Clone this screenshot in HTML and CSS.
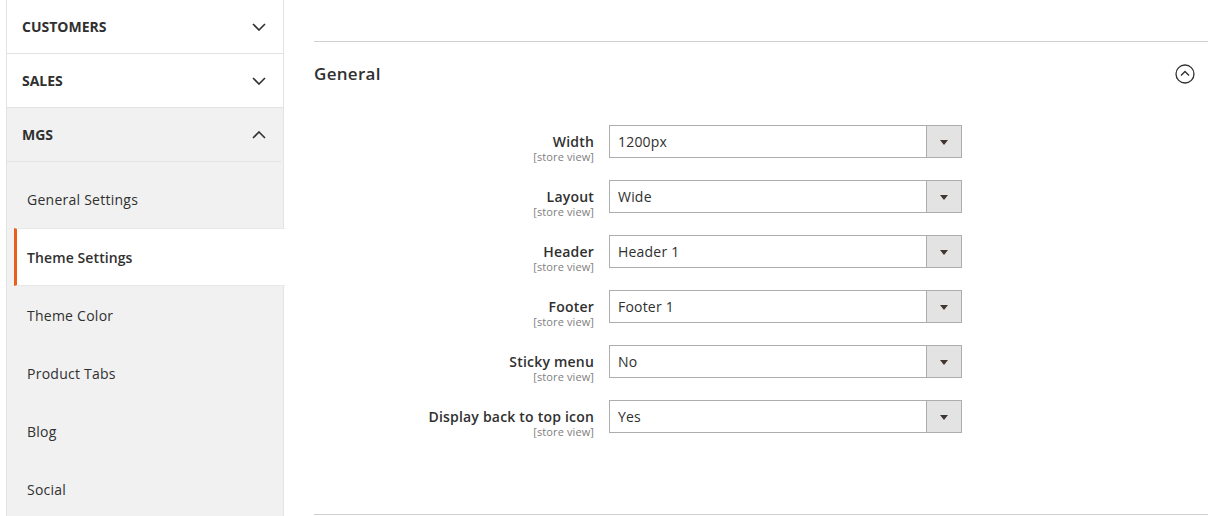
FILE: index.html
```html
<!DOCTYPE html>
<html>
<head>
<meta charset="utf-8">
<link rel="stylesheet" href="styles.css">
</head>
<body>
<div class="page">
  <nav class="sidebar">
    <div class="nav-title">
      <span>Customers</span>
      <svg class="chev" width="14" height="8" viewBox="0 0 14 8"><polyline points="1,1 7,7 13,1" fill="none" stroke="#303030" stroke-width="1.6"/></svg>
    </div>
    <div class="nav-title">
      <span>Sales</span>
      <svg class="chev" width="14" height="8" viewBox="0 0 14 8"><polyline points="1,1 7,7 13,1" fill="none" stroke="#303030" stroke-width="1.6"/></svg>
    </div>
    <div class="nav-title open">
      <span>MGS</span>
      <svg class="chev" width="14" height="8" viewBox="0 0 14 8"><polyline points="1,7 7,1 13,7" fill="none" stroke="#303030" stroke-width="1.6"/></svg>
    </div>
    <ul class="nav-items">
      <li class="nav-item">General Settings</li>
      <li class="nav-item active">Theme Settings</li>
      <li class="nav-item">Theme Color</li>
      <li class="nav-item">Product Tabs</li>
      <li class="nav-item">Blog</li>
      <li class="nav-item">Social</li>
    </ul>
  </nav>
  <main class="content">
    <section class="section">
      <div class="section-head">
        <h2>General</h2>
        <svg class="toggle" width="22" height="22" viewBox="0 0 22 22"><circle cx="11" cy="11" r="9" fill="none" stroke="#303030" stroke-width="1.3"/><polyline points="7,12.5 11,8.5 15,12.5" fill="none" stroke="#303030" stroke-width="1.4"/></svg>
      </div>
      <div class="form">
        <div class="row">
          <div class="label"><span class="name">Width</span><span class="scope">[store view]</span></div>
          <div class="select"><span class="value">1200px</span><span class="btn"><i class="tri"></i></span></div>
        </div>
        <div class="row">
          <div class="label"><span class="name">Layout</span><span class="scope">[store view]</span></div>
          <div class="select"><span class="value">Wide</span><span class="btn"><i class="tri"></i></span></div>
        </div>
        <div class="row">
          <div class="label"><span class="name">Header</span><span class="scope">[store view]</span></div>
          <div class="select"><span class="value">Header 1</span><span class="btn"><i class="tri"></i></span></div>
        </div>
        <div class="row">
          <div class="label"><span class="name">Footer</span><span class="scope">[store view]</span></div>
          <div class="select"><span class="value">Footer 1</span><span class="btn"><i class="tri"></i></span></div>
        </div>
        <div class="row">
          <div class="label"><span class="name">Sticky menu</span><span class="scope">[store view]</span></div>
          <div class="select"><span class="value">No</span><span class="btn"><i class="tri"></i></span></div>
        </div>
        <div class="row">
          <div class="label"><span class="name">Display back to top icon</span><span class="scope">[store view]</span></div>
          <div class="select"><span class="value">Yes</span><span class="btn"><i class="tri"></i></span></div>
        </div>
      </div>
    </section>
  </main>
</div>
</body>
</html>
```
FILE: styles.css
```css
* { box-sizing: border-box; }
html, body { margin: 0; padding: 0; background: #fff; }
body {
  font-family: "Open Sans", "Noto Sans", sans-serif;
  color: #303030;
  width: 1210px;
  height: 516px;
  overflow: hidden;
}
.page {
  display: flex;
  align-items: flex-start;
}
.sidebar {
  margin-left: 6px;
  width: 278px;
  height: 516px;
  border-left: 1px solid #e3e3e3;
  border-right: 1px solid #e3e3e3;
  background: #f1f1f1;
  flex: none;
}
.nav-title {
  height: 54px;
  display: flex;
  align-items: center;
  justify-content: space-between;
  padding: 0 17px 0 15px;
  background: #fff;
  border-bottom: 1px solid #e3e3e3;
  font-weight: 700;
  font-size: 14px;
  text-transform: uppercase;
  color: #303030;
}
.nav-title.open {
  background: #f1f1f1;
  border-bottom: none;
  position: relative;
}
.nav-title.open span { margin-top: -2px; }
.nav-title.open::after {
  content: "";
  position: absolute;
  left: 0;
  right: 2px;
  bottom: 0;
  height: 1px;
  background: #e3e3e3;
}
.chev { display: block; }
.nav-items {
  list-style: none;
  margin: 0;
  padding: 8px 0 0 0;
}
.nav-item {
  height: 58px;
  display: flex;
  align-items: center;
  margin-left: 7px;
  padding-left: 10px;
  border-left: 3px solid transparent;
  font-size: 14px;
  letter-spacing: 0.25px;
  color: #303030;
}
.nav-item.active {
  background: #fff;
  border-left-color: #e8601a;
  margin-right: -2px;
  font-weight: 600;
  letter-spacing: 0.1px;
  border-top: 1px solid #e8e8e8;
  border-bottom: 1px solid #e8e8e8;
}
.content {
  flex: 1;
  margin-left: 30px;
  margin-right: 2px;
  padding-top: 41px;
}
.section {
  border-top: 1px solid #d1d1d1;
  border-bottom: 1px solid #d1d1d1;
  height: 474px;
}
.section-head {
  display: flex;
  align-items: center;
  justify-content: space-between;
  height: 62px;
}
.section-head h2 {
  margin: 0;
  font-size: 17px;
  font-weight: 600;
  letter-spacing: 0.3px;
  color: #303030;
}
.toggle { display: block; margin-right: 12px; margin-top: 2px; }
.form {
  padding-top: 21px;
  display: flex;
  flex-direction: column;
  gap: 22px;
}
.row {
  display: flex;
  align-items: flex-start;
  height: 33px;
}
.label {
  width: 280px;
  display: flex;
  flex-direction: column;
  align-items: flex-end;
  margin-right: 15px;
  padding-top: 7px;
}
.name {
  font-size: 14px;
  font-weight: 600;
  line-height: 19px;
  letter-spacing: 0.2px;
  color: #303030;
}
.scope {
  font-size: 11px;
  line-height: 12px;
  letter-spacing: 0.1px;
  color: #808080;
}
.select {
  width: 353px;
  height: 33px;
  border: 1px solid #adadad;
  display: flex;
  align-items: stretch;
  background: #fff;
}
.value {
  flex: 1;
  font-size: 14px;
  padding-left: 8px;
  line-height: 31px;
  letter-spacing: 0.2px;
  color: #303030;
}
.btn {
  width: 35px;
  background: #e3e3e3;
  border-left: 1px solid #adadad;
  display: flex;
  align-items: center;
  justify-content: center;
}
.tri {
  display: block;
  width: 0;
  height: 0;
  border-left: 4px solid transparent;
  border-right: 4px solid transparent;
  border-top: 5px solid #41362f;
  margin-top: 1px;
}
```
